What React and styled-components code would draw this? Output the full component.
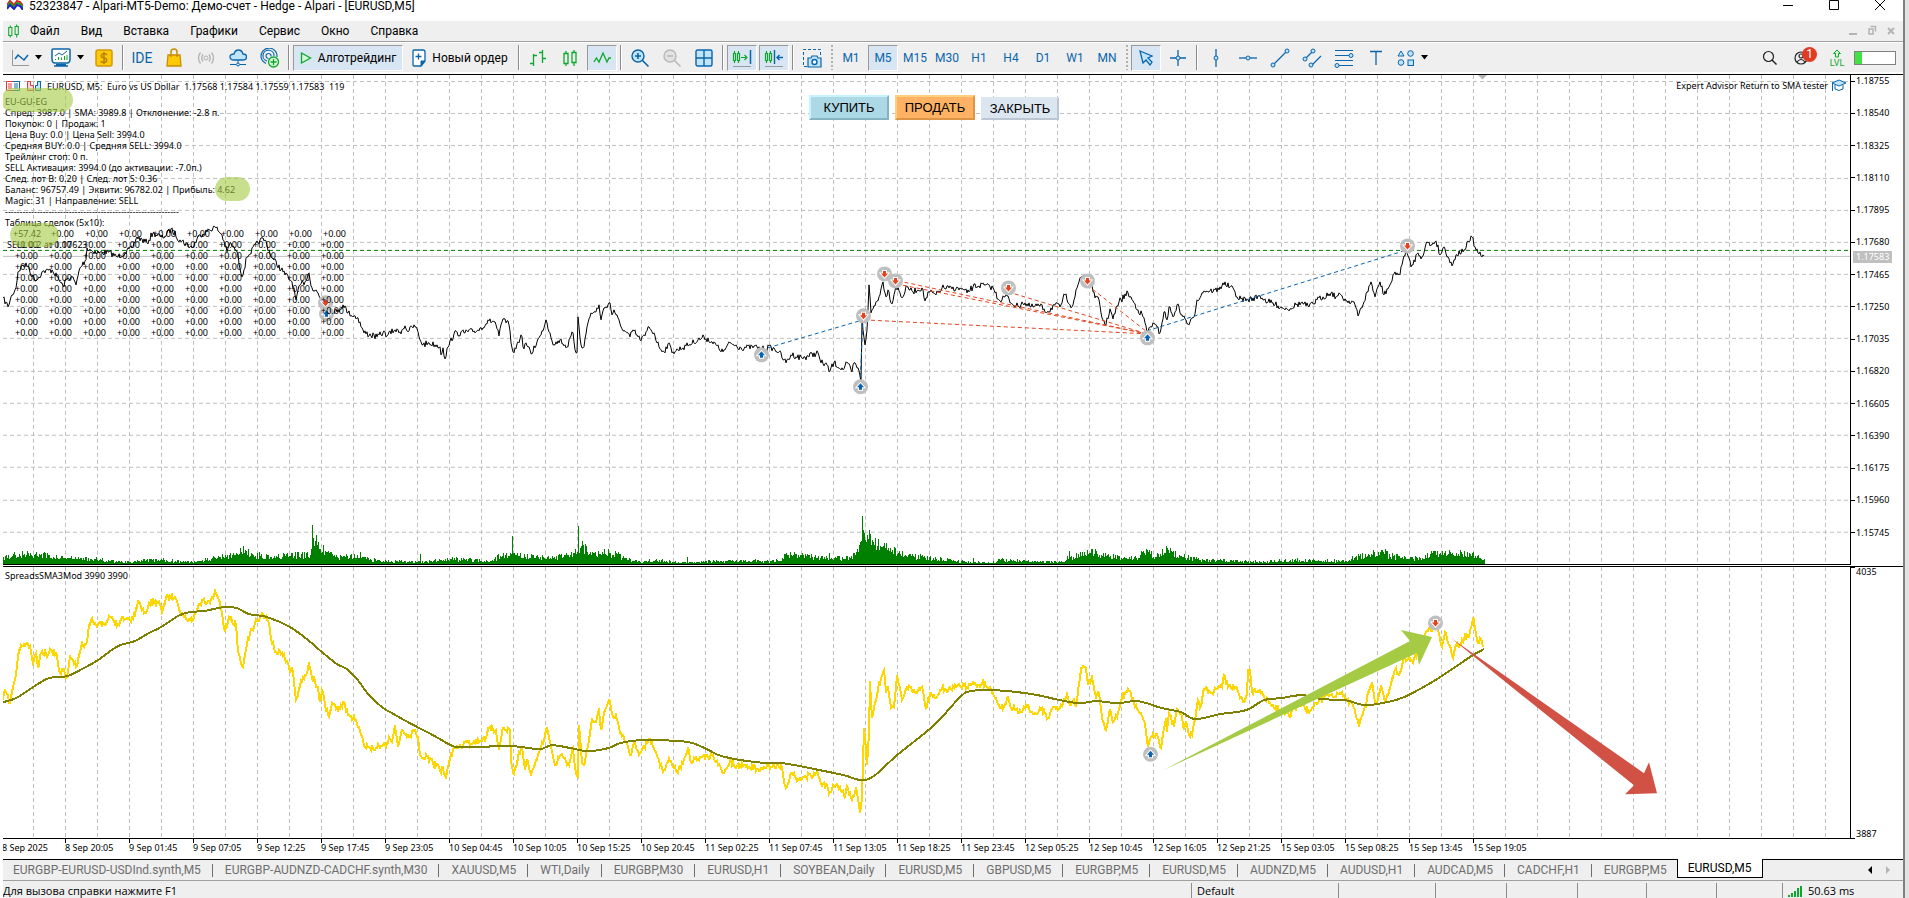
import React from 'react';
import styled, { createGlobalStyle, css } from 'styled-components';

const uiFont = '"Roboto", "Noto Sans", sans-serif';
const chartFont = '"Noto Sans", "DejaVu Sans Condensed", sans-serif';
const BLUE = '#0b65ab';
const SKY = '#bfe4fb';
const GREEN = '#0ca82c';
const GREY = '#b4b4b4';

const GlobalStyle = createGlobalStyle`
  * {
    box-sizing: border-box;
  }
  body {
    margin: 0;
    background: #fff;
    font-family: ${uiFont};
    font-size: 12px;
    color: #000;
    overflow: hidden;
  }
  button {
    font-family: inherit;
    font-size: inherit;
    color: inherit;
    padding: 0;
    border: 0;
    background: none;
  }
`;

/* ---------- window ---------- */

const Desktop = styled.div`
  display: flex;
  height: 100vh;
  padding-left: 3px;
`;

const Window = styled.main`
  flex: 1;
  min-width: 0;
  display: flex;
  flex-direction: column;
`;

const Backdrop = styled.div`
  width: 6px;
  border-left: 2px solid #808080;
  background: #e2e2e2;
`;

const TitleBar = styled.header`
  display: flex;
  align-items: flex-start;
  gap: 6px;
  height: 21px;
  padding-left: 4px;
  line-height: 12px;
  svg {
    display: block;
  }
`;

const Title = styled.h1`
  flex: 1;
  margin: 0;
  font-size: 12px;
  font-weight: 400;
`;

const WindowControls = styled.div`
  display: flex;
  gap: 16px;
  padding-right: 8px;
  button {
    width: 30px;
    height: 12px;
    display: flex;
    justify-content: center;
  }
`;

const MenuBar = styled.nav`
  display: flex;
  align-items: center;
  height: 21px;
  padding-left: 4px;
  background: #efefef;
  border-bottom: 1px solid #a0a0a0;
`;

const MenuItem = styled.button`
  padding: 0 11px 0 10px;
  line-height: 20px;
`;

const ChildControls = styled.div`
  display: flex;
  gap: 9px;
  margin-left: auto;
  padding-right: 7px;
  button {
    width: 10px;
    height: 12px;
  }
  svg {
    display: block;
  }
`;

/* ---------- toolbar ---------- */

const ToolBar = styled.div`
  display: flex;
  align-items: center;
  gap: 2px;
  height: 32px;
  padding: 0 7px 0 4px;
  border-top: 1px solid #fff;
  border-bottom: 2px solid #fff;
  background: #efefef;
`;

const ToolButton = styled.button`
  flex: none;
  display: flex;
  align-items: center;
  justify-content: center;
  gap: 6px;
  width: ${(p) => p.$width || 30}px;
  height: 26px;
  white-space: nowrap;
  color: ${(p) => (p.$dark ? '#000' : BLUE)};
  border: 1px solid transparent;
  ${(p) => p.$active && css`
    background: #d8e5f2;
    border-color: #9a9a9a #fff #fff #9a9a9a;
  `}
  svg {
    flex: none;
    display: block;
  }
`;

const Ide = styled.span`
  font-size: 14px;
`;

const Separator = styled.span`
  width: 2px;
  height: 25px;
  margin: 0 1px;
  border-left: 1px solid #8c8c8c;
  border-right: 1px solid #fff;
`;

const Grip = styled.span`
  width: 2px;
  height: 25px;
  margin: 0 1px 0 2px;
  background: repeating-linear-gradient(#b0b0b0 0 2px, transparent 2px 4px);
`;

const ToolEnd = styled.div`
  display: flex;
  align-items: center;
  gap: 2px;
  margin-left: auto;
`;

const UserButton = styled(ToolButton)`
  position: relative;
`;

const Badge = styled.span`
  position: absolute;
  top: 1px;
  left: 14px;
  width: 15px;
  height: 15px;
  border-radius: 50%;
  background: #e03c22;
  color: #fff;
  line-height: 15px;
  text-align: center;
`;

const Level = styled.button`
  display: flex;
  flex-direction: column;
  align-items: center;
  width: 30px;
  margin-left: 3px;
  color: ${GREEN};
  font-size: 9px;
  line-height: 8px;
`;

const Meter = styled.div`
  width: 42px;
  height: 14px;
  border: 1px solid #808080;
  background: linear-gradient(90deg, #43e143 7px, #fff 7px);
`;

/* ---------- chart ---------- */

const Pane = styled.section`
  display: flex;
  flex: ${(p) => p.$grow} 1 0;
  min-height: 0;
  border-top: 1px solid #000;
  font-family: ${chartFont};
  font-size: 9px;
  line-height: 11px;
`;

const Plot = styled.div`
  position: relative;
  flex: 1;
  min-width: 0;
  overflow: hidden;
  border-right: 1px solid #000;
  border-bottom: 1px solid #000;
  > svg {
    display: block;
    width: 100%;
    height: 100%;
  }
`;

const PaneGap = styled.div`
  height: 1px;
`;

const Scale = styled.div`
  position: relative;
  flex: none;
  display: flex;
  flex-direction: column;
  justify-content: space-between;
  width: 52px;
  padding-bottom: ${(p) => p.$bottom}px;
  line-height: ${(p) => (p.$bottom ? 12 : 10)}px;
`;

const Tick = styled.span`
  display: flex;
  align-items: ${(p) => p.$at || 'center'};
  gap: 1px;
  &::before {
    content: '';
    width: 4px;
    height: 1px;
    background: #000;
  }
`;

const PriceTag = styled.span`
  position: absolute;
  top: 176px;
  left: 2px;
  width: 39px;
  padding-left: 3px;
  background: #c0c0c0;
  color: #fff;
`;

const Comment = styled.div`
  position: absolute;
  top: 5px;
  left: 2px;
  p {
    margin: 0;
    white-space: pre;
  }
`;

const Symbol = styled.div`
  display: flex;
  align-items: center;
  gap: 5px;
  height: 12px;
  margin-bottom: 4px;
  white-space: pre;
`;

const Deals = styled.table`
  margin-left: 7px;
  border-collapse: collapse;
  td {
    width: 34px;
    height: 11px;
    padding: 0 0 0 3px;
  }
  tr:first-child td {
    padding-left: 5px;
  }
  tr:first-child td:first-child {
    padding-left: 1px;
  }
`;

const OrderLabel = styled.span`
  position: absolute;
  top: 164px;
  left: 4px;
`;

const Highlight = styled.span`
  position: absolute;
  top: ${(p) => p.$top}px;
  left: ${(p) => p.$left}px;
  width: ${(p) => p.$width}px;
  height: 24px;
  border-radius: 12px;
  background: rgba(164, 203, 67, 0.6);
`;

const TradePanel = styled.div`
  position: absolute;
  top: 20px;
  left: 806px;
  display: flex;
  align-items: flex-end;
  gap: 6px;
`;

const palette = {
  buy: ['#add8e6', '#c6f3fd', '#86b3c1'],
  sell: ['#ffb264', '#ffd080', '#dc9446'],
  close: ['#dce6f1', '#dce6f1', '#bcc6d2'],
};

const TradeButton = styled.button`
  width: ${(p) => (p.$kind === 'close' ? 78 : 80)}px;
  height: ${(p) => (p.$kind === 'close' ? 23 : 25)}px;
  font-family: 'Liberation Sans', sans-serif;
  font-size: 13px;
  background: ${(p) => palette[p.$kind][0]};
  border: 2px solid;
  border-color: ${(p) => {
    const [, light, dark] = palette[p.$kind];
    return `${light} ${dark} ${dark} ${light}`;
  }};
`;

const Expert = styled.div`
  position: absolute;
  top: 4px;
  right: 3px;
  display: flex;
  align-items: center;
  gap: 3px;
`;

const IndicatorName = styled.span`
  position: absolute;
  top: 3px;
  left: 2px;
`;

const TimeScale = styled.div`
  display: grid;
  grid-template-columns: 62fr repeat(23, 64fr) 313fr 53px;
  height: 20px;
  overflow: hidden;
  font-family: ${chartFont};
  font-size: 9px;
  line-height: 18px;
`;

const Time = styled.span`
  min-width: 0;
  white-space: nowrap;
  background: linear-gradient(#000, #000) no-repeat 0 0 / 1px 4px;
`;

const FirstTime = styled(Time)`
  display: flex;
  justify-content: flex-end;
  padding-right: 17px;
  background: none;
`;

/* ---------- bottom ---------- */

const TabBar = styled.div`
  display: flex;
  height: 22px;
  background: #efefef;
  border-top: 1px solid #000;
  border-bottom: 1px solid #a0a0a0;
`;

const Tab = styled.button`
  flex: none;
  height: 20px;
  padding: 0 12px;
  color: #6e6e6e;
  background: linear-gradient(#6e6e6e, #6e6e6e) no-repeat 100% 4px / 1px 13px;
  &:first-child {
    padding-left: 10px;
  }
  ${(p) => p.$active && css`
    height: 19px;
    margin: -1px 0 0 -2px;
    padding: 0 10px;
    color: #000;
    background: #fff;
    border: 1px solid #000;
    border-top: 0;
  `}
`;

const TabArrows = styled.div`
  display: flex;
  align-items: center;
  gap: 14px;
  margin-left: auto;
  padding-right: 13px;
  svg {
    display: block;
  }
`;

const StatusBar = styled.footer`
  display: grid;
  grid-template-columns: 1fr 147px 97px 71px 71px 69px 70px 66px 121px;
  height: 17px;
  padding-top: 2px;
  background: #efefef;
  font-family: 'Open Sans', 'Noto Sans', sans-serif;
  font-size: 11px;
`;

const Cell = styled.span`
  display: flex;
  align-items: center;
  gap: 6px;
  padding-left: 5px;
  line-height: 17px;
  overflow: hidden;
  border-left: 1px solid #8c8c8c;
  &:first-child {
    padding-left: 0;
    border-left: 0;
  }
`;

/* ---------- icons ---------- */

function Icon({ w = 20, h = 20, children, stroke = BLUE, ...rest }) {
  return (
    <svg width={w} height={h} viewBox={`0 0 ${w} ${h}`} fill="none" stroke={stroke} aria-hidden="true" {...rest}>
      {children}
    </svg>
  );
}

const Caret = () => (
  <svg width="7" height="5" viewBox="0 0 7 5" aria-hidden="true"><path d="M0 0h7L3.500 4.500z" fill="#000" /></svg>
);

const Candles = ({ w = 16, h = 20 }) => (
  <Icon w={w} h={h} viewBox="0 0 16 20" stroke={GREEN}>
    <path d="M2 5.500h4v10H2zM4 3v2.500M4 15.500V18M10 4.500h4v10h-4zM12 2v2.500M12 14.500V18" strokeWidth="1.300" />
  </Icon>
);

const icons = {
  line: (
    <Icon w={18} h={20}>
      <path d="M1.500 2v15.500H18" stroke="#9a9a9a" />
      <path d="M4 11l3-4 6 5 4-5" strokeWidth="1.500" />
    </Icon>
  ),
  profile: (
    <Icon w={20} h={20}>
      <path d="M2 1h16q1 0 1 1v9q0 4-3 4H4q-3 0-3-4V2q0-1 1-1z" fill="#fff" strokeWidth="1.500" />
      <path d="M3 18h14M5 16.500h10" strokeWidth="1.500" />
      <path d="M4 8l4-3 3 2 5-4" />
      <path d="M4.500 12v-1M7.500 12V9M10.500 12V9.500M13.500 12V8M16 12V7" stroke={GREEN} />
    </Icon>
  ),
  dollar: (
    <Icon w={18} h={18}>
      <rect x="1" y="1" width="16" height="16" rx="2" fill="#ffca05" stroke="#d19a0a" strokeWidth="1.500" />
      <path d="M12 6q-1-1.500-3-1.500T6.300 6.700Q6.300 8.500 9 9t2.700 2.300Q11.700 13.500 9 13.500T6 12M9 3v12" stroke="#b8800a" strokeWidth="1.500" />
    </Icon>
  ),
  bag: (
    <Icon w={16} h={19} stroke="#c78f06">
      <path d="M2 7h12l1 11H1z" fill="#ffca05" strokeWidth="1.300" />
      <path d="M5 9V4q0-3 3-3t3 3v5" strokeWidth="1.500" />
    </Icon>
  ),
  signal: (
    <Icon w={18} h={16} stroke="#b2b2b2">
      <circle cx="9" cy="8" r="2" />
      <path d="M6 4.500q-2.500 3.500 0 7M12 4.500q2.500 3.500 0 7M3.500 2.500q-4 5.500 0 11M14.500 2.500q4 5.500 0 11" strokeWidth="1.300" />
    </Icon>
  ),
  cloud: (
    <Icon w={18} h={18}>
      <path d="M5 11q-4 0-4-3t4-3q1-4 4.500-4T14 5q3.500 0 3.500 3T14 11z" fill={SKY} strokeWidth="1.300" />
      <path d="M9 11v3M1 15.500h6M11 15.500h6" />
      <circle cx="9" cy="15.500" r="1.500" fill={SKY} />
    </Icon>
  ),
  radarPlus: (
    <Icon w={20} h={20}>
      <path d="M6 15.500A8 8 0 1 1 17 9M7 13A5.500 5.500 0 1 1 14 8M8.500 10.500A2.500 2.500 0 1 1 11 8.500" strokeWidth="1.200" />
      <circle cx="13.500" cy="14" r="5" fill="#dcf8dc" stroke={GREEN} strokeWidth="1.300" />
      <path d="M13.500 11v6M10.500 14h6" stroke={GREEN} strokeWidth="1.300" />
    </Icon>
  ),
  play: (
    <Icon w={12} h={14} stroke={GREEN}><path d="M1.500 2l9 5-9 5z" fill="#d5f6d5" strokeWidth="1.300" /></Icon>
  ),
  order: (
    <Icon w={14} h={18}>
      <path d="M2 1h9q2 0 2 2v9l-4 5H2q-1 0-1-1V2q0-1 1-1z" fill="#fff" strokeWidth="1.300" />
      <path d="M9 17v-5h4z" fill={BLUE} />
      <path d="M3.500 7.500h6M6.500 4.500v6" strokeWidth="1.300" />
    </Icon>
  ),
  bars: (
    <Icon w={18} h={20} stroke={GREEN}>
      <path d="M4.500 6v12M1 15.500h3.500M4.500 7.500H8M13.500 2v13M10 4.500h3.500M13.500 10.500H17" strokeWidth="1.300" />
    </Icon>
  ),
  zigzag: (
    <Icon w={18} h={16} stroke={GREEN}>
      <path d="M1 12l2.500-4L6 12l4-9 4 9 2-4h2" strokeWidth="1.300" />
    </Icon>
  ),
  zoomIn: (
    <Icon w={20} h={20}>
      <circle cx="8" cy="8" r="6" fill={SKY} strokeWidth="1.400" />
      <path d="M5 8h6M8 5v6M12.500 12.500l6 6" strokeWidth="1.600" />
    </Icon>
  ),
  zoomOut: (
    <Icon w={20} h={20} stroke="#b8b8b8">
      <circle cx="8" cy="8" r="6" fill="#e2e2e2" strokeWidth="1.400" />
      <path d="M5 8h6M12.500 12.500l6 6" strokeWidth="1.600" />
    </Icon>
  ),
  tile: (
    <Icon w={18} h={18}>
      <rect x="1" y="1" width="16" height="16" rx="1.500" fill={SKY} strokeWidth="1.400" />
      <path d="M9 1v16M1 9h16" strokeWidth="1.400" />
    </Icon>
  ),
  shift: (
    <Icon w={20} h={20}>
      <path d="M1.500 5.500h2v7h-2zM5.500 5.500h2v7h-2zM2.500 3v2.500M2.500 12.500V15M6.500 3v2.500M6.500 12.500V15M9 9.500h6M12.500 7l2.500 2.500-2.500 2.500" stroke={GREEN} strokeWidth="1.200" />
      <path d="M18.500 2v14" strokeWidth="1.500" />
      <path d="M1 18.500h18" stroke="#9a9a9a" />
    </Icon>
  ),
  autoscroll: (
    <Icon w={20} h={20}>
      <path d="M1.500 5.500h2v7h-2zM5.500 5.500h2v7h-2zM2.500 3v2.500M2.500 12.500V15M6.500 3v2.500M6.500 12.500V15" stroke={GREEN} strokeWidth="1.200" />
      <path d="M10.500 2v14M13 9.500h6M15.500 7L13 9.500l2.500 2.500" strokeWidth="1.400" />
      <path d="M1 18.500h18" stroke="#9a9a9a" />
    </Icon>
  ),
  camera: (
    <Icon w={20} h={20}>
      <path d="M5 18.500H1.500v-17h17V8" strokeDasharray="3 2" />
      <path d="M6 10h3l1-2h5l1 2h3v9H6z" fill={SKY} strokeWidth="1.200" />
      <circle cx="12.500" cy="14" r="2.500" fill="#fff" strokeWidth="1.400" />
    </Icon>
  ),
  cursor: (
    <Icon w={16} h={18}>
      <path d="M2 2l12 5-4 2 4 4-2 3-4-5-3 3z" fill={SKY} strokeWidth="1.300" />
    </Icon>
  ),
  cross: (
    <Icon w={18} h={18}>
      <path d="M9 1v16M1 9h16" strokeWidth="1.300" />
      <circle cx="9" cy="9" r="2" fill={SKY} />
    </Icon>
  ),
  vline: (
    <Icon w={8} h={20}>
      <path d="M4 1v18" strokeWidth="1.300" />
      <circle cx="4" cy="10" r="2" fill={SKY} />
    </Icon>
  ),
  hline: (
    <Icon w={20} h={8}>
      <path d="M1 4h18" strokeWidth="1.300" />
      <circle cx="10" cy="4" r="2" fill={SKY} />
    </Icon>
  ),
  trend: (
    <Icon w={20} h={20}>
      <path d="M3 17L17 3" strokeWidth="1.200" />
      <circle cx="3" cy="17" r="2" fill={SKY} />
      <circle cx="17" cy="3" r="2" fill={SKY} />
    </Icon>
  ),
  channel: (
    <Icon w={20} h={20}>
      <path d="M3 11l8-8M10 17l9-9" strokeWidth="1.200" />
      <circle cx="3" cy="11" r="2" fill={SKY} />
      <circle cx="11" cy="3" r="2" fill={SKY} />
      <circle cx="9" cy="17" r="2" fill={SKY} />
    </Icon>
  ),
  fibo: (
    <Icon w={20} h={20}>
      <path d="M1 2.500h18M1 7.500h18M1 12.500h18M1 17.500h18" strokeWidth="1.200" />
      <circle cx="17" cy="7.500" r="2" fill={SKY} />
      <circle cx="3" cy="17.500" r="2" fill={SKY} />
    </Icon>
  ),
  text: (
    <Icon w={14} h={16}><path d="M1 1.500h12M7 1.500V15" strokeWidth="1.300" /></Icon>
  ),
  shapes: (
    <Icon w={18} h={18}>
      <path d="M4 2l3 5H1z" fill={SKY} />
      <circle cx="13.500" cy="4.500" r="2.800" fill={SKY} />
      <circle cx="4" cy="13.500" r="2.800" fill={SKY} />
      <rect x="11" y="11" width="5.500" height="5.500" fill={SKY} />
    </Icon>
  ),
  search: (
    <Icon w={16} h={16} stroke="#222">
      <circle cx="6.500" cy="6.500" r="5" strokeWidth="1.200" />
      <path d="M10 10l4.500 4.500" strokeWidth="1.400" />
    </Icon>
  ),
  user: (
    <Icon w={16} h={16} stroke="#222">
      <circle cx="7" cy="8" r="6" strokeWidth="1.200" />
      <circle cx="7" cy="6" r="2" strokeWidth="1.200" />
      <path d="M3 12q4-5 8 0" strokeWidth="1.200" />
    </Icon>
  ),
};

const AppLogo = () => (
  <Icon w={16} h={10} strokeWidth="2">
    <path d="M0 5l3-4 4 4 3-4 3 1 3 4" stroke="#e02020" />
    <path d="M0 7l3-4 4 4 3-4 3 1 3 4" stroke="#1e9a1e" />
    <path d="M0 9l3-4 4 4 3-4 3 1 3 4" stroke="#2020d0" />
  </Icon>
);

/* ---------- series ---------- */

// x,y anchors, one chart pixel per M5 bar
const price = '3,298 8,307 12,295 16,288 18,272 23,265 29,267 32,277 37,280 42,272 52,270 57,277 63,286 68,278 72,277 76,285 80,268 86,260 87,248 97,253 108,252 117,257 125,253 132,248 137,237 147,243 153,233 163,238 171,229 180,240 192,248 200,235 215,227 222,235 227,252 230,243 237,252 242,277 247,257 260,240 265,240 272,258 283,272 292,282 296,300 300,285 305,282 309,273 312,288 317,292 322,302 328,308 337,312 343,305 348,313 358,318 364,333 377,337 383,333 388,335 395,330 400,332 405,326 408,332 412,327 416,327 419,337 423,345 429,343 440,347 441,355 443,348 445,359 448,347 454,334 477,331 489,321 495,322 499,336 503,319 509,325 511,343 514,353 521,335 524,349 526,343 531,354 537,342 541,335 546,320 550,333 554,345 560,340 567,347 573,333 575,350 577,353 578,317 581,345 584,347 587,327 591,313 596,312 599,305 601,320 604,308 610,303 612,315 614,310 621,327 630,337 633,330 640,340 645,336 649,327 654,333 659,347 664,352 668,344 673,352 686,346 704,337 712,342 723,352 730,343 741,348 757,347 761,350 771,347 779,352 784,360 786,363 791,355 802,358 818,353 821,363 827,365 829,372 834,363 843,370 847,363 852,372 854,363 858,368 861,382 862,320 865,345 867,330 869,285 871,313 879,297 883,282 886,297 888,290 892,304 896,285 902,298 907,287 913,292 922,288 925,301 929,292 936,295 942,288 962,289 967,293 973,287 984,285 993,288 999,300 1007,296 1011,303 1019,307 1022,302 1031,307 1040,306 1048,312 1054,305 1060,307 1065,295 1072,307 1080,278 1084,275 1092,285 1095,298 1099,300 1102,318 1106,325 1110,309 1113,319 1119,302 1128,293 1138,310 1144,318 1147,333 1153,323 1160,333 1164,312 1167,320 1169,307 1173,317 1177,305 1182,315 1189,325 1194,317 1197,300 1204,291 1219,290 1223,283 1234,290 1238,299 1248,300 1260,296 1268,302 1278,306 1287,309 1301,303 1309,307 1317,300 1331,293 1336,297 1341,295 1346,301 1354,302 1358,316 1364,302 1371,282 1375,297 1380,282 1384,295 1391,283 1395,272 1400,275 1403,260 1406,250 1411,267 1418,253 1422,257 1427,242 1431,245 1436,241 1440,255 1444,247 1452,266 1456,255 1464,250 1472,237 1476,250 1482,257 1484,256';

const spread = '3,700 5,690 10,703 13,687 16,675 19,650 24,644 30,646 33,663 36,653 38,668 41,653 48,655 51,650 56,653 60,673 63,669 67,677 70,655 76,667 81,647 87,642 89,625 92,618 96,625 105,625 110,617 118,624 122,617 130,620 135,615 138,600 141,607 146,613 151,601 158,603 162,612 167,595 176,599 180,612 186,619 193,620 196,612 202,600 210,603 215,591 220,603 225,632 229,617 236,625 238,652 243,667 248,638 255,623 263,614 269,623 272,643 276,652 282,653 288,663 290,673 292,667 296,700 301,680 307,673 309,662 312,678 318,687 320,702 322,690 326,710 329,717 332,703 338,710 344,702 348,715 356,720 361,735 365,747 376,748 384,743 386,747 389,737 392,742 395,725 398,747 402,730 409,737 415,730 418,737 420,755 423,758 427,756 433,763 438,765 441,773 443,767 446,779 449,762 454,748 457,746 473,743 486,737 489,728 496,730 499,750 503,728 510,730 511,763 514,774 518,757 522,747 525,770 527,760 531,774 536,760 541,748 547,728 551,747 555,765 561,755 569,765 573,748 576,773 578,777 579,725 582,763 584,765 588,745 592,718 596,722 599,708 601,730 604,713 610,701 613,717 616,715 620,733 624,737 631,755 634,742 639,755 650,739 654,748 663,772 669,758 677,772 683,763 688,747 691,762 701,757 713,755 718,765 724,773 730,760 735,767 745,765 758,769 773,765 782,767 784,782 787,787 791,773 798,779 818,773 822,786 827,785 829,794 834,786 840,787 845,798 847,786 852,800 856,787 860,813 862,797 864,728 867,765 869,733 870,681 872,718 875,703 881,678 884,670 886,693 888,687 891,708 894,707 897,675 902,700 907,687 916,693 922,687 926,708 931,693 936,698 942,689 952,690 958,685 967,687 973,682 977,687 985,683 993,693 998,704 1004,707 1008,697 1011,708 1022,712 1026,705 1032,712 1044,710 1048,718 1052,709 1060,708 1067,694 1071,705 1074,698 1076,707 1081,668 1086,668 1088,685 1092,677 1096,697 1099,693 1102,718 1106,730 1110,710 1113,722 1118,712 1122,698 1129,691 1134,703 1140,713 1145,723 1148,747 1153,733 1158,737 1161,748 1166,718 1167,732 1169,713 1174,727 1177,709 1181,713 1184,730 1186,722 1189,735 1192,735 1195,720 1198,700 1200,708 1204,689 1211,693 1216,689 1222,687 1224,675 1228,687 1236,687 1240,698 1243,702 1247,695 1248,670 1250,670 1252,692 1257,692 1262,692 1271,705 1281,710 1290,717 1293,707 1302,705 1310,711 1316,703 1326,695 1336,697 1340,693 1345,698 1353,705 1359,727 1363,713 1366,707 1368,692 1372,682 1375,702 1378,700 1381,685 1385,702 1390,687 1395,670 1400,673 1403,660 1410,658 1413,663 1417,652 1424,637 1429,628 1437,628 1442,647 1445,632 1449,645 1453,658 1457,643 1459,647 1465,635 1469,637 1473,617 1476,633 1478,643 1480,638 1483,647';

const sma = '3,702 16,698 33,687 49,678 67,676 82,669 98,660 118,646 135,641 147,634 161,627 178,616 190,612 204,611 224,607 237,608 249,614 267,617 290,627 308,640 322,652 337,664 347,669 357,679 369,695 382,707 392,713 408,722 433,735 453,746 465,747 512,746 539,749 552,745 571,748 588,751 608,748 620,743 639,740 660,740 689,742 707,749 722,756 756,762 783,763 820,770 844,775 862,780 875,775 897,755 934,725 960,697 971,691 995,690 1032,694 1060,700 1079,703 1097,701 1118,703 1138,701 1162,708 1181,712 1195,719 1220,714 1246,710 1264,700 1281,698 1302,695 1322,699 1345,700 1365,705 1387,702 1404,697 1432,682 1455,667 1473,655 1484,649';

const volume = '3,7 24,10 40,9 60,6 90,5 120,2 160,4 190,2 215,6 243,12 260,8 285,8 310,9 313,26 320,15 335,7 360,7 380,3 420,2 450,5 490,3 500,8 516,9 550,6 570,9 577,12 581,18 592,12 610,11 625,6 640,2 655,4 680,1 720,3 780,3 786,11 800,9 820,6 850,6 858,12 863,34 866,22 870,30 873,22 885,16 900,10 925,6 970,2 990,1 1000,4 1020,3 1060,2 1070,7 1090,11 1110,8 1130,5 1148,12 1155,7 1166,13 1180,8 1200,4 1240,3 1260,2 1290,4 1320,3 1348,3 1355,7 1372,9 1384,10 1400,6 1420,6 1430,10 1458,10 1475,8 1484,5';

const volumeSpikes = [[243, 18], [312, 39], [360, 12], [420, 10], [512, 28], [578, 38], [687, 7], [829, 11], [862, 48], [973, 6], [1069, 13], [1095, 15], [1166, 18], [1373, 14], [1385, 15]];

function parse(text) {
  return text.split(' ').map((pair) => pair.split(',').map(Number));
}

function random(seed) {
  let s = seed;
  return () => {
    s = (s * 16807) % 2147483647;
    return s / 2147483647;
  };
}

// one value for every bar between the anchors, with a bit of market noise
function bars(text, noise, seed) {
  const points = parse(text);
  const rnd = random(seed);
  const out = [];
  for (let i = 0; i < points.length - 1; i += 1) {
    const [x0, y0] = points[i];
    const [x1, y1] = points[i + 1];
    for (let x = x0; x < x1; x += 1) {
      const y = y0 + ((y1 - y0) * (x - x0)) / (x1 - x0);
      const d = x === x0 ? 0 : noise(y) * (rnd() * 2 - 1);
      out.push([x, Math.round(y + d)]);
    }
  }
  out.push(points[points.length - 1]);
  return out;
}

// cubic segments through every point, tangents along the neighbours
function smooth(text) {
  const p = parse(text);
  let d = `M${p[0].join(' ')}`;
  for (let i = 0; i < p.length - 1; i += 1) {
    const a = p[Math.max(0, i - 1)];
    const b = p[i];
    const c = p[i + 1];
    const e = p[Math.min(p.length - 1, i + 2)];
    const c1 = [b[0] + (c[0] - a[0]) / 6, b[1] + (c[1] - a[1]) / 6];
    const c2 = [c[0] - (e[0] - b[0]) / 6, c[1] - (e[1] - b[1]) / 6];
    d += `C${c1.join(' ')} ${c2.join(' ')} ${c.join(' ')}`;
  }
  return d;
}

const toLine = (list) => list.map((p) => p.join(',')).join(' ');

const priceLine = toLine(bars(price, () => 3, 7));
const spreadLine = toLine(bars(spread, () => 3, 11));
const smaPath = smooth(sma);
const volumePath =
  bars(volume, (h) => h * 0.35 + 0.6, 5).map(([x, h]) => `M${x} 564v-${Math.max(1, h)}h1V564`).join('') +
  volumeSpikes.map(([x, h]) => `M${x} 564v-${h}h1V564`).join('');

const gridX = Array.from({ length: 57 }, (_, i) => 33 + i * 32);
const gridY = [81, 113, 145, 178, 210, 242, 274, 306, 338, 371, 403, 435, 467, 500, 532];

function Marker({ x, y, sell }) {
  return (
    <g transform={`translate(${x} ${y})`}>
      <circle r="7.500" fill="#bfbfbf" />
      <path
        d="M0-3.500L3.500 .5H1.500V3h-3V.5h-2z"
        transform={sell ? 'rotate(180)' : undefined}
        fill={sell ? '#e2431e' : '#0b62b0'}
        stroke="#fff"
        strokeWidth="2"
        paintOrder="stroke"
      />
    </g>
  );
}

function PriceChart() {
  return (
    <svg viewBox="3 75 1847 489" preserveAspectRatio="none" role="img" aria-label="EURUSD M5">
      <g stroke="#c0c0c0" strokeDasharray="4 3" shapeRendering="crispEdges">
        {gridX.map((x) => <line key={x} x1={x + 0.5} x2={x + 0.5} y1="75" y2="564" />)}
        {gridY.map((y) => <line key={y} x1="3" x2="1850" y1={y + 0.5} y2={y + 0.5} />)}
      </g>
      <path d={volumePath} fill="#008000" shapeRendering="crispEdges" />
      <g shapeRendering="crispEdges">
        <line x1="3" x2="1850" y1="250.500" y2="250.500" stroke="#008000" strokeDasharray="4 3" />
        <line x1="3" x2="1850" y1="256.500" y2="256.500" stroke="#c0c0c0" />
      </g>
      <polyline points={priceLine} fill="none" stroke="#000" shapeRendering="crispEdges" />
      <path d="M1478 75h9l-4.500 4.500z" fill="#b4b4b4" />
      <g fill="none" strokeDasharray="4 3" shapeRendering="crispEdges">
        <path d="M761 350l102-30M860 384l3-64M1147 331l260-81" stroke="#0b62b0" />
        <path d="M864 320l283 14M884 278l263 56M896 284l251 50M1008 292l139 42M1087 285l60 47" stroke="#e2431e" />
      </g>
      <Marker x={325.5} y={303} sell />
      <Marker x={326.5} y={314} />
      <Marker x={761.5} y={355} />
      <Marker x={860.5} y={387} />
      <Marker x={863.5} y={316} sell />
      <Marker x={884.5} y={274} sell />
      <Marker x={895.5} y={281} sell />
      <Marker x={1008.5} y={288} sell />
      <Marker x={1087.5} y={281} sell />
      <Marker x={1147.5} y={338} />
      <Marker x={1407.5} y={246} sell />
    </svg>
  );
}

function SpreadChart() {
  return (
    <svg viewBox="3 567 1847 271" preserveAspectRatio="none" role="img" aria-label="SpreadsSMA3Mod">
      <g stroke="#c0c0c0" strokeDasharray="4 3" shapeRendering="crispEdges">
        {gridX.map((x) => <line key={x} x1={x + 0.5} x2={x + 0.5} y1="567" y2="838" />)}
      </g>
      <polyline points={spreadLine} fill="none" stroke="#ffd700" strokeWidth="2" shapeRendering="crispEdges" />
      <path d={smaPath} fill="none" stroke="#808000" strokeWidth="2" shapeRendering="crispEdges" />
      <Marker x={1150.5} y={754} />
      <Marker x={1435.5} y={623} sell />
      <path d="M1163 770L1410 641l-9-11 31 7-13 28-2-12z" fill="#a4cb43" />
      <path d="M1451 638l193 135 5-11 8 31-32 1 9-9z" fill="#d15145" />
    </svg>
  );
}

/* ---------- content ---------- */

const menu = ['Файл', 'Вид', 'Вставка', 'Графики', 'Сервис', 'Окно', 'Справка'];
const timeframes = ['M1', 'M5', 'M15', 'M30', 'H1', 'H4', 'D1', 'W1', 'MN'];
const prices = ['1.18755', '1.18540', '1.18325', '1.18110', '1.17895', '1.17680', '1.17465', '1.17250', '1.17035', '1.16820', '1.16605', '1.16390', '1.16175', '1.15960', '1.15745'];
const times = ['8 Sep 20:05', '9 Sep 01:45', '9 Sep 07:05', '9 Sep 12:25', '9 Sep 17:45', '9 Sep 23:05', '10 Sep 04:45', '10 Sep 10:05', '10 Sep 15:25', '10 Sep 20:45', '11 Sep 02:25', '11 Sep 07:45', '11 Sep 13:05', '11 Sep 18:25', '11 Sep 23:45', '12 Sep 05:25', '12 Sep 10:45', '12 Sep 16:05', '12 Sep 21:25', '15 Sep 03:05', '15 Sep 08:25', '15 Sep 13:45', '15 Sep 19:05'];
const tabs = ['EURGBP-EURUSD-USDInd.synth,M5', 'EURGBP-AUDNZD-CADCHF.synth,M30', 'XAUUSD,M5', 'WTI,Daily', 'EURGBP,M30', 'EURUSD,H1', 'SOYBEAN,Daily', 'EURUSD,M5', 'GBPUSD,M5', 'EURGBP,M5', 'EURUSD,M5', 'AUDNZD,M5', 'AUDUSD,H1', 'AUDCAD,M5', 'CADCHF,H1', 'EURGBP,M5', 'EURUSD,M5'];
const comment = [
  'EU-GU-EG',
  'Спред: 3987.0 | SMA: 3989.8 | Отклонение: -2.8 п.',
  'Покупок: 0 | Продаж: 1',
  'Цена Buy: 0.0 | Цена Sell: 3994.0',
  'Средняя BUY: 0.0 | Средняя SELL: 3994.0',
  'Трейлинг стоп: 0 п.',
  'SELL Активация: 3994.0 (до активации: -7.0п.)',
  'След. лот B: 0.20 | След. лот S: 0.36',
  'Баланс: 96757.49 | Эквити: 96782.02 | Прибыль: 4.62',
  'Magic: 31 | Направление: SELL',
  '-'.repeat(60),
  'Таблица сделок (5x10):',
];

function Tool({ name, ...rest }) {
  return <ToolButton aria-label={name} {...rest}>{icons[name]}</ToolButton>;
}

function MainToolBar() {
  return (
    <ToolBar>
      <ToolButton $width={39} aria-label="chart type">{icons.line}<Caret /></ToolButton>
      <ToolButton $width={39} aria-label="profile">{icons.profile}<Caret /></ToolButton>
      <Tool name="dollar" />
      <Separator />
      <ToolButton><Ide>IDE</Ide></ToolButton>
      <Tool name="bag" />
      <Tool name="signal" />
      <Tool name="cloud" />
      <Tool name="radarPlus" />
      <Separator />
      <ToolButton $width={110} $active $dark>{icons.play} Алготрейдинг</ToolButton>
      <ToolButton $width={110} $dark>{icons.order} Новый ордер</ToolButton>
      <Separator />
      <Tool name="bars" />
      <ToolButton aria-label="candles"><Candles /></ToolButton>
      <Tool name="zigzag" $active />
      <Separator />
      <Tool name="zoomIn" />
      <Tool name="zoomOut" />
      <Tool name="tile" />
      <Separator />
      <Tool name="shift" $active />
      <Tool name="autoscroll" $active />
      <Separator />
      <Tool name="camera" />
      <Grip />
      {timeframes.map((t) => <ToolButton key={t} $active={t === 'M5'}>{t}</ToolButton>)}
      <Grip />
      <Tool name="cursor" $active />
      <Tool name="cross" />
      <Separator />
      <Tool name="vline" />
      <Tool name="hline" />
      <Tool name="trend" />
      <Tool name="channel" />
      <Tool name="fibo" />
      <Tool name="text" />
      <ToolButton $width={39} aria-label="shapes">{icons.shapes}<Caret /></ToolButton>
      <ToolEnd>
        <Tool name="search" />
        <UserButton aria-label="account">{icons.user}<Badge>1</Badge></UserButton>
        <Level>
          <Icon w={10} h={10} stroke={GREEN}><path d="M5 1l3.500 3.500h-2V8h-3V4.500h-2z" fill="#d5f6d5" /></Icon>
          LVL
        </Level>
        <Meter />
      </ToolEnd>
    </ToolBar>
  );
}

export default function App() {
  return (
    <Desktop>
      <GlobalStyle />
      <Window>
        <TitleBar>
          <AppLogo />
          <Title>52323847 - Alpari-MT5-Demo: Демо-счет - Hedge - Alpari - [EURUSD,M5]</Title>
          <WindowControls>
            <button aria-label="minimize"><Icon w={10} h={12} stroke="#000"><path d="M0 5.500h10" /></Icon></button>
            <button aria-label="maximize"><Icon w={10} h={12} stroke="#000"><path d="M.5.500h9v9h-9z" /></Icon></button>
            <button aria-label="close"><Icon w={10} h={12} stroke="#000"><path d="M0 0l10 10M10 0L0 10" /></Icon></button>
          </WindowControls>
        </TitleBar>
        <MenuBar>
          <Candles w={13} h={16} />
          {menu.map((m) => <MenuItem key={m}>{m}</MenuItem>)}
          <ChildControls>
            <button aria-label="minimize chart"><Icon w={10} h={12} stroke={GREY}><path d="M1 9h8" strokeWidth="2" /></Icon></button>
            <button aria-label="restore chart"><Icon w={10} h={12} stroke={GREY}><path d="M3.500 1.500h5v5M2 4h4v5H2z" strokeWidth="1.500" /></Icon></button>
            <button aria-label="close chart"><Icon w={10} h={12} stroke={GREY}><path d="M2 3l6 6M8 3L2 9" strokeWidth="2" /></Icon></button>
          </ChildControls>
        </MenuBar>
        <MainToolBar />

        <Pane $grow={491}>
          <Plot>
            <PriceChart />
            <Comment>
              <Symbol>
                <Icon w={16} h={12}>
                  <path d="M8 1.500H1.500v9H8M3 4h4M3 6h4M3 8h4" stroke="#e03c3c" />
                  <path d="M8 1.500h6.500v9H8M9 4h4M9 6h4M9 8h4" />
                </Icon>
                <Icon w={16} h={12}>
                  <path d="M1.500 1.500h3v4h3v5h-6z" fill="#fbdada" stroke="#e03c3c" />
                  <path d="M14.500 1.500h-3v4h-2v5h5z" fill={SKY} />
                </Icon>
                EURUSD, M5:  Euro vs US Dollar  1.17568 1.17584 1.17559 1.17583  119
              </Symbol>
              {comment.map((line) => <p key={line}>{line}</p>)}
              <Deals>
                <tbody>
                  {Array.from({ length: 10 }, (_, r) => (
                    <tr key={r}>
                      {Array.from({ length: 10 }, (__, c) => <td key={c}>{r + c === 0 ? '+57.42' : '+0.00'}</td>)}
                    </tr>
                  ))}
                </tbody>
              </Deals>
            </Comment>
            <OrderLabel>SELL 0.2 at 1.17623</OrderLabel>
            <Highlight $top={13} $left={-2} $width={72} />
            <Highlight $top={102} $left={212} $width={35} />
            <Highlight $top={148} $left={7} $width={49} />
            <TradePanel>
              <TradeButton $kind="buy">КУПИТЬ</TradeButton>
              <TradeButton $kind="sell">ПРОДАТЬ</TradeButton>
              <TradeButton $kind="close">ЗАКРЫТЬ</TradeButton>
            </TradePanel>
            <Expert>
              Expert Advisor Return to SMA tester
              <Icon w={16} h={13}>
                <path d="M1 4l7-3 7 3-7 3z" fill={SKY} />
                <path d="M4 6v4q4 3 8 0V6M1.500 4v8" fill="none" />
              </Icon>
            </Expert>
          </Plot>
          <Scale $bottom={26}>
            {prices.map((p) => <Tick key={p}>{p}</Tick>)}
            <PriceTag>1.17583</PriceTag>
          </Scale>
        </Pane>
        <PaneGap />
        <Pane $grow={273}>
          <Plot>
            <SpreadChart />
            <IndicatorName>SpreadsSMA3Mod 3990 3990</IndicatorName>
          </Plot>
          <Scale $bottom={0}>
            <Tick $at="flex-start">4035</Tick>
            <Tick $at="flex-end">3887</Tick>
          </Scale>
        </Pane>
        <TimeScale>
          <FirstTime>8 Sep 2025</FirstTime>
          {times.map((t) => <Time key={t}>{t}</Time>)}
        </TimeScale>

        <TabBar>
          {tabs.map((t, i) => <Tab key={`${t}${i}`} $active={i === tabs.length - 1}>{t}</Tab>)}
          <TabArrows>
            <button aria-label="previous tab"><Icon w={4} h={8} stroke="none"><path d="M4 0v8L0 4z" fill="#000" /></Icon></button>
            <button aria-label="next tab"><Icon w={4} h={8} stroke="none"><path d="M0 0v8l4-4z" fill={GREY} /></Icon></button>
          </TabArrows>
        </TabBar>
        <StatusBar>
          <Cell>Для вызова справки нажмите F1</Cell>
          <Cell>Default</Cell>
          <Cell /><Cell /><Cell /><Cell /><Cell /><Cell />
          <Cell>
            <Icon w={14} h={12} stroke={GREEN}>
              <path d="M1 12v-2M4 12V8M7 12V6M10 12V3M13 12V1" strokeWidth="2" />
            </Icon>
            50.63 ms
          </Cell>
        </StatusBar>
      </Window>
      <Backdrop />
    </Desktop>
  );
}
